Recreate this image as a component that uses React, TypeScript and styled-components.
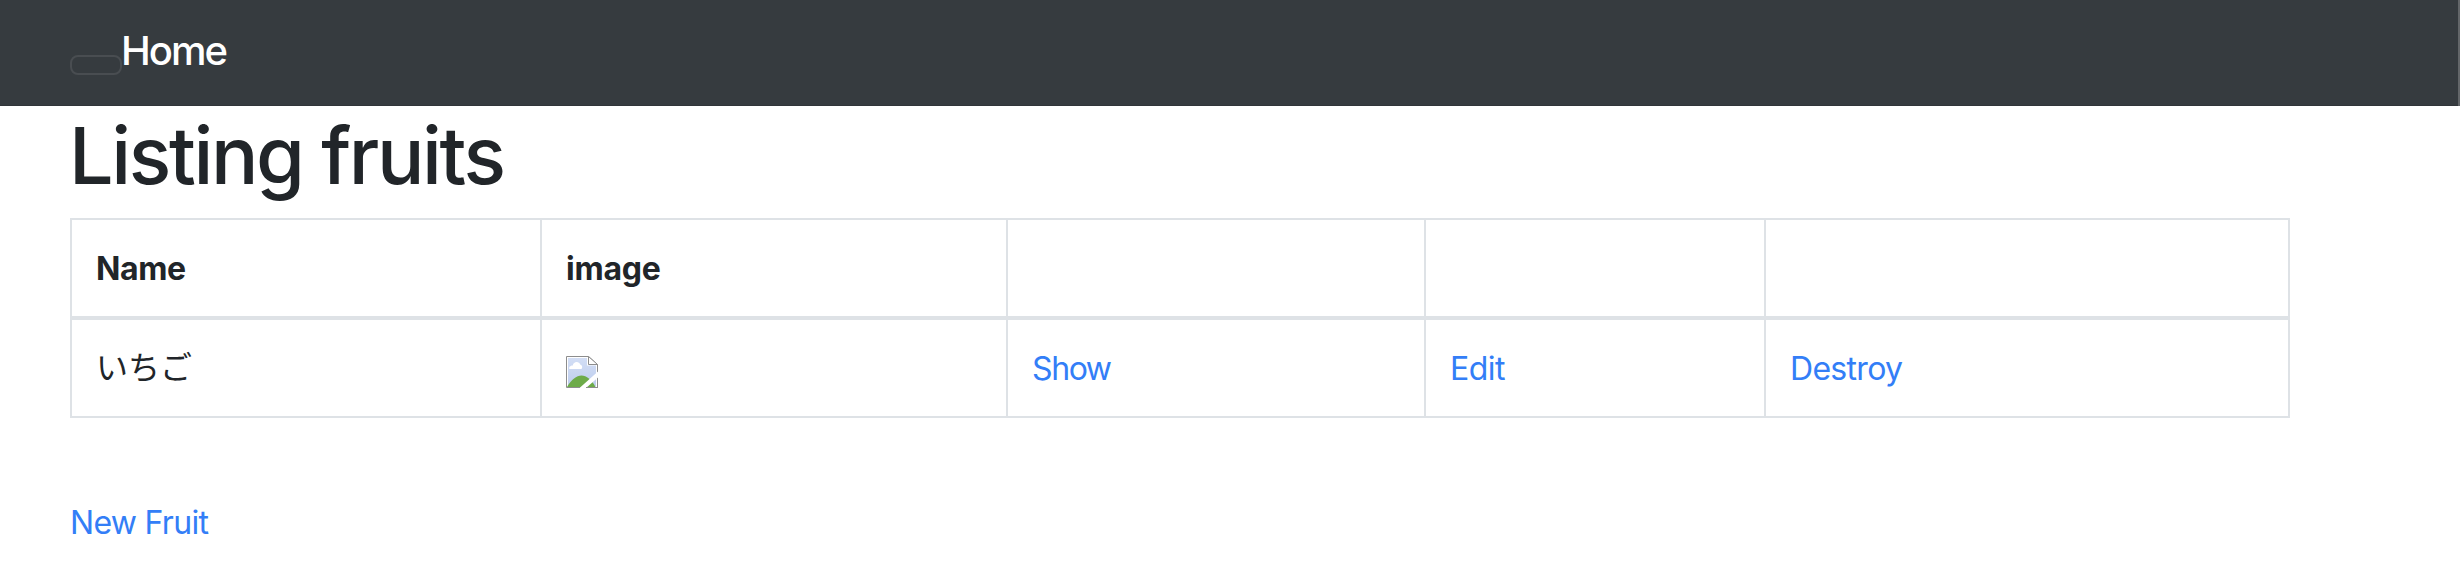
import React from 'react';
import styled, { createGlobalStyle } from 'styled-components';

const GlobalStyle = createGlobalStyle`
  *, *::before, *::after {
    box-sizing: border-box;
  }

  body {
    margin: 0;
    background: #fff;
    color: #212529;
    font-family: Inter, 'Noto Sans CJK JP', sans-serif;
    font-size: 32px;
    line-height: 48px;
  }
`;

const Navbar = styled.nav`
  display: flex;
  align-items: flex-start;
  height: 106px;
  padding: 21px 70px 0;
  background: #363b3f;
  border-right: 2px solid #636669;
  box-shadow: inset 0 -1px 0 #313539;
`;

const Toggler = styled.button`
  width: 52px;
  height: 20px;
  margin: 34px 0 0;
  padding: 0;
  background: transparent;
  border: 2px solid #494d51;
  border-radius: 8px;
`;

const Brand = styled.a`
  margin-left: -1px;
  color: #fff;
  font-size: 40px;
  font-weight: 450;
  line-height: 60px;
  letter-spacing: -2px;
  text-decoration: none;
`;

const Container = styled.main`
  width: 2360px;
  padding: 0 70px;
`;

const Title = styled.h1`
  margin: 0 0 15px -1px;
  padding-top: 1px;
  font-size: 79px;
  font-weight: 520;
  line-height: 96px;
  letter-spacing: -2.4px;
`;

const Table = styled.table`
  width: 2220px;
  margin-bottom: 81px;
  border-collapse: separate;
  border-spacing: 0;
  border: solid #dee2e6;
  border-width: 0 2px 2px 0;
  table-layout: fixed;
`;

const Column = styled.col<{ $width: number }>`
  width: ${({ $width }) => $width}px;
`;

const HeaderCell = styled.th<{ $tracking?: number }>`
  height: 102px;
  padding: 25px 24px 23px;
  border: solid #dee2e6;
  border-width: 2px 0 4px 2px;
  font-weight: 700;
  letter-spacing: ${({ $tracking = 0 }) => $tracking}px;
  text-align: left;
  vertical-align: top;
`;

const Cell = styled.td`
  height: 96px;
  padding: 25px 24px 23px;
  border-left: 2px solid #dee2e6;
  vertical-align: top;
`;

const FruitName = styled.span`
  display: block;
  margin: -4px 0 4px;
  font-family: 'Noto Sans CJK JP', sans-serif;
`;

const Link = styled.a<{ $tracking: number }>`
  color: #337ef7;
  letter-spacing: ${({ $tracking }) => $tracking}px;
  text-decoration: none;
`;

const MissingImage = styled.svg`
  display: block;
  width: 32px;
  height: 32px;
  margin-top: 11px;
`;

const BrokenImageIcon = () => (
  <MissingImage viewBox="0 0 32 32" role="img">
    <defs>
      <linearGradient id="sky" x1="0" y1="0" x2="0" y2="1">
        <stop offset="0" stopColor="#d3def5" />
        <stop offset="1" stopColor="#bdcdee" />
      </linearGradient>
    </defs>
    <path d="M.5.5H22.5L31.5 8.5V31.5H.5Z" fill="#fff" stroke="#8d8d8d" />
    <path d="M2 2H21V9.5H30V30.5H2Z" fill="url(#sky)" />
    <path d="M22.5.5V8.5H31.5Z" fill="#fff" stroke="#8d8d8d" />
    <path d="M3.5 13C2.4 11 4.5 9.3 6.8 9.4C7 5.2 13.5 4.7 14.2 8.6C16.3 9 16.8 11.6 15.5 13Z" fill="#fff" />
    <path d="M1 31C5.500 23.600 10.500 19.600 15.500 19.600C20.500 19.600 25.500 23.600 29.500 31Z" fill="#6dab49" />
    <path d="M13.500 32L32 15.500V21.500L20 32Z" fill="#fff" />
    <path d="M1 31.500H13.800M20 31.500H32" stroke="#8d8d8d" />
  </MissingImage>
);

const columnWidths = [470, 466, 418, 340, 524];

export default function App() {
  return (
    <>
      <GlobalStyle />
      <Navbar>
        <Toggler type="button" />
        <Brand>Home</Brand>
      </Navbar>
      <Container>
        <Title>Listing fruits</Title>
        <Table>
          <colgroup>
            {columnWidths.map((width, index) => (
              <Column key={index} $width={width} />
            ))}
          </colgroup>
          <thead>
            <tr>
              <HeaderCell $tracking={-0.4}>Name</HeaderCell>
              <HeaderCell $tracking={-0.2}>image</HeaderCell>
              <HeaderCell />
              <HeaderCell />
              <HeaderCell />
            </tr>
          </thead>
          <tbody>
            <tr>
              <Cell>
                <FruitName>いちご</FruitName>
              </Cell>
              <Cell>
                <BrokenImageIcon />
              </Cell>
              <Cell>
                <Link $tracking={-1.4}>Show</Link>
              </Cell>
              <Cell>
                <Link $tracking={-0.5}>Edit</Link>
              </Cell>
              <Cell>
                <Link $tracking={-0.7}>Destroy</Link>
              </Cell>
            </tr>
          </tbody>
        </Table>
        <Link $tracking={-0.7}>New Fruit</Link>
      </Container>
    </>
  );
}
